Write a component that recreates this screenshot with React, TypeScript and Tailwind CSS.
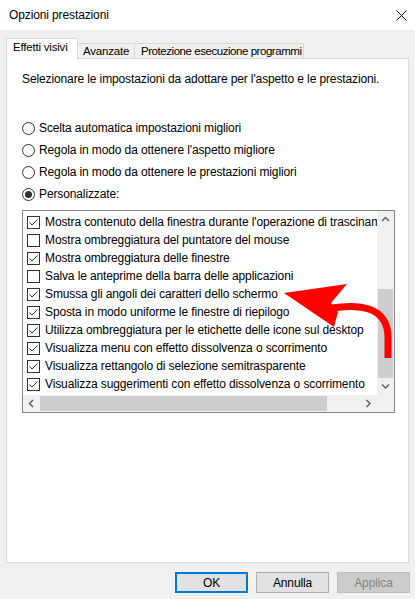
import React from "react";

const items: [boolean, string][] = [
  [true, "Mostra contenuto della finestra durante l'operazione di trascinamento"],
  [false, "Mostra ombreggiatura del puntatore del mouse"],
  [true, "Mostra ombreggiatura delle finestre"],
  [false, "Salva le anteprime della barra delle applicazioni"],
  [true, "Smussa gli angoli dei caratteri dello schermo"],
  [true, "Sposta in modo uniforme le finestre di riepilogo"],
  [true, "Utilizza ombreggiatura per le etichette delle icone sul desktop"],
  [true, "Visualizza menu con effetto dissolvenza o scorrimento"],
  [true, "Visualizza rettangolo di selezione semitrasparente"],
  [true, "Visualizza suggerimenti con effetto dissolvenza o scorrimento"],
];

const radios: [boolean, string][] = [
  [false, "Scelta automatica impostazioni migliori"],
  [false, "Regola in modo da ottenere l'aspetto migliore"],
  [false, "Regola in modo da ottenere le prestazioni migliori"],
  [true, "Personalizzate:"],
];

function Check({ checked }: { checked: boolean }) {
  return (
    <span className="w-[13px] h-[13px] border border-[#333333] bg-white flex items-center justify-center shrink-0">
      {checked && (
        <svg width="11" height="11" viewBox="0 0 11 11">
          <path d="M1.5 5.5 L4 8 L9.5 2.5" fill="none" stroke="#333333" strokeWidth="1" />
        </svg>
      )}
    </span>
  );
}

function Radio({ sel }: { sel: boolean }) {
  return (
    <span className="w-[13px] h-[13px] rounded-full border border-[#333333] bg-white flex items-center justify-center shrink-0">
      {sel && <span className="w-[7px] h-[7px] rounded-full bg-[#333333]" />}
    </span>
  );
}

function Chevron({ dir }: { dir: "up" | "down" | "left" | "right" }) {
  const d =
    dir === "up"
      ? "M1 5 L4.5 1.5 L8 5"
      : dir === "down"
      ? "M1 1.5 L4.5 5 L8 1.5"
      : dir === "left"
      ? "M5 1 L1.5 4.5 L5 8"
      : "M1.5 1 L5 4.5 L1.5 8";
  const w = dir === "up" || dir === "down" ? 9 : 7;
  const h = dir === "up" || dir === "down" ? 7 : 9;
  return (
    <svg width={w} height={h} viewBox={`0 0 ${w} ${h}`}>
      <path d={d} fill="none" stroke="#606060" strokeWidth="1.5" />
    </svg>
  );
}

export default function App() {
  return (
    <div className="relative w-[415px] h-[599px] overflow-hidden bg-[#f0f0f0] flex flex-col text-[12px] text-black font-['Liberation_Sans',Arial,sans-serif] tracking-[-0.12px]">
      {/* Title bar */}
      <div className="h-[30px] bg-white flex items-center justify-between pl-[9px] pr-[8px] shrink-0">
        <span className="leading-[16px]">Opzioni prestazioni</span>
        <svg width="11" height="11" viewBox="0 0 11 11">
          <path d="M0.5 0.5 L10.5 10.5 M10.5 0.5 L0.5 10.5" stroke="#000" strokeWidth="1" />
        </svg>
      </div>

      {/* Tabs */}
      <div className="pt-[7px] pl-[6px] flex items-end h-[28px] shrink-0 whitespace-nowrap text-[11.5px] tracking-[-0.2px]">
        <div className="relative z-10 -mb-px h-[21px] w-[72px] shrink-0 bg-white border border-b-0 border-[#d9d9d9] flex items-center pl-[6px] pb-[2px]">
          Effetti visivi
        </div>
        <div className="-ml-px h-[15px] w-[58px] shrink-0 bg-[#f0f0f0] border border-b-0 border-[#d9d9d9] flex items-center pl-[5px] pt-[1px]">
          Avanzate
        </div>
        <div className="-ml-px h-[15px] w-[170px] shrink-0 bg-[#f0f0f0] border border-b-0 border-[#d9d9d9] flex items-center pl-[6px] pt-[1px] tracking-[-0.45px]">
          Protezione esecuzione programmi
        </div>
      </div>

      {/* Panel */}
      <div className="ml-[6px] w-[403px] h-[505px] bg-white border border-[#d9d9d9] pl-[15px] pt-[12px] flex flex-col shrink-0">
        <div className="leading-[16px]">
          Selezionare le impostazioni da adottare per l'aspetto e le prestazioni.
        </div>
        <div className="mt-[30px] flex flex-col">
          {radios.map(([s, t]) => (
            <div key={t} className="h-[22px] flex items-center gap-[4px]">
              <Radio sel={s} />
              <span>{t}</span>
            </div>
          ))}
        </div>
        {/* List */}
        <div className="mt-[5px] w-[373px] h-[203px] border border-[#828790] flex flex-col">
          <div className="h-[184px] flex">
            <div className="flex-1 overflow-hidden pt-[2px] pl-[4px]">
              {items.map(([c, t]) => (
                <div key={t} className="h-[18px] flex items-center gap-[5px] whitespace-nowrap">
                  <Check checked={c} />
                  <span>{t}</span>
                </div>
              ))}
            </div>
            <div className="w-[17px] bg-[#f0f0f0] flex flex-col shrink-0">
              <div className="h-[17px] flex items-center justify-center">
                <Chevron dir="up" />
              </div>
              <div className="flex-1 flex flex-col justify-end px-[1px]">
                <div className="h-[89px] bg-[#cdcdcd]" />
              </div>
              <div className="h-[17px] flex items-center justify-center">
                <Chevron dir="down" />
              </div>
            </div>
          </div>
          <div className="h-[17px] flex">
            <div className="flex-1 bg-[#f0f0f0] flex items-stretch">
              <div className="w-[17px] flex items-center justify-center">
                <Chevron dir="left" />
              </div>
              <div className="flex-1 py-[1px]">
                <div className="h-full w-[287px] bg-[#cdcdcd]" />
              </div>
              <div className="w-[17px] flex items-center justify-center">
                <Chevron dir="right" />
              </div>
            </div>
            <div className="w-[17px] bg-[#f0f0f0]" />
          </div>
        </div>
      </div>

      {/* Buttons */}
      <div className="mt-[9px] flex justify-end gap-[8px] pr-[5px]">
        <div className="w-[73px] h-[21px] border-2 border-[#0078d7] bg-[#e1e1e1] flex items-center justify-center">
          OK
        </div>
        <div className="w-[73px] h-[21px] border border-[#adadad] bg-[#e1e1e1] flex items-center justify-center">
          Annulla
        </div>
        <div className="w-[73px] h-[21px] border border-[#bfbfbf] bg-[#cccccc] text-[#838383] flex items-center justify-center">
          Applica
        </div>
      </div>

      {/* Red annotation arrow */}
      <svg
        className="absolute left-0 top-0 pointer-events-none"
        width="415"
        height="599"
        viewBox="0 0 415 599"
      >
        <path
          d="M332 308 C358 304 387 306 388 336 L388 358"
          fill="none"
          stroke="#ff0000"
          strokeWidth="7"
        />
        <polygon points="284,293 347,284 331,303 338,312 334,327" fill="#ff0000" />
      </svg>
    </div>
  );
}
